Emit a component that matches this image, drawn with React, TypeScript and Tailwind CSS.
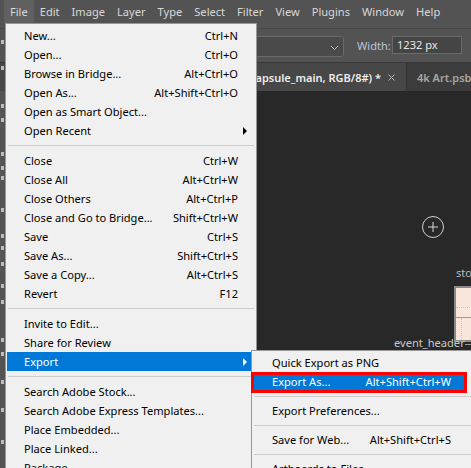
type Entry = { label: string; shortcut?: string; sub?: boolean; active?: boolean } | 'sep'

const menuBar = ['File', 'Edit', 'Image', 'Layer', 'Type', 'Select', 'Filter', 'View', 'Plugins', 'Window', 'Help']

const fileItems: Entry[] = [
  { label: 'New...', shortcut: 'Ctrl+N' },
  { label: 'Open...', shortcut: 'Ctrl+O' },
  { label: 'Browse in Bridge...', shortcut: 'Alt+Ctrl+O' },
  { label: 'Open As...', shortcut: 'Alt+Shift+Ctrl+O' },
  { label: 'Open as Smart Object...' },
  { label: 'Open Recent', sub: true },
  'sep',
  { label: 'Close', shortcut: 'Ctrl+W' },
  { label: 'Close All', shortcut: 'Alt+Ctrl+W' },
  { label: 'Close Others', shortcut: 'Alt+Ctrl+P' },
  { label: 'Close and Go to Bridge...', shortcut: 'Shift+Ctrl+W' },
  { label: 'Save', shortcut: 'Ctrl+S' },
  { label: 'Save As...', shortcut: 'Shift+Ctrl+S' },
  { label: 'Save a Copy...', shortcut: 'Alt+Ctrl+S' },
  { label: 'Revert', shortcut: 'F12' },
  'sep',
  { label: 'Invite to Edit...' },
  { label: 'Share for Review' },
  { label: 'Export', sub: true, active: true },
  'sep',
  { label: 'Search Adobe Stock...' },
  { label: 'Search Adobe Express Templates...' },
  { label: 'Place Embedded...' },
  { label: 'Place Linked...' },
  { label: 'Package...' },
]

const exportItems: Entry[] = [
  { label: 'Quick Export as PNG' },
  { label: 'Export As...', shortcut: 'Alt+Shift+Ctrl+W', active: true },
  'sep',
  { label: 'Export Preferences...' },
  'sep',
  { label: 'Save for Web...', shortcut: 'Alt+Shift+Ctrl+S' },
  'sep',
  { label: 'Artboards to Files...' },
]

const toolMarks = [40, 66, 104, 118, 152, 166, 176, 208, 234, 246, 262, 284, 300, 338, 352, 380, 408, 440]

function Arrow({ white }: { white?: boolean }) {
  return (
    <span
      className={`absolute right-[8px] top-[6px] w-0 h-0 border-y-[4px] border-y-transparent border-l-[4px] ${
        white ? 'border-l-white' : 'border-l-black'
      }`}
    />
  )
}

function FileMenu() {
  return (
    <div className="absolute left-[5px] top-[23px] w-[252px] h-[460px] bg-[#f0f0f0] border border-[#979797] pt-[2px]">
      {fileItems.map((it, i) =>
        it === 'sep' ? (
          <div key={i} className="h-[11px] mx-[2px] flex items-center">
            <div className="h-px w-full bg-[#cccccc]" />
          </div>
        ) : (
          <div
            key={i}
            className={`relative h-[19px] mx-[1px] pl-[17px] pr-[17px] pt-[1px] flex items-center justify-between ${
              it.active ? 'bg-[#0078d7] text-white' : 'text-black'
            }`}
          >
            <span>{it.label}</span>
            {it.shortcut && <span>{it.shortcut}</span>}
            {it.sub && <Arrow white={it.active} />}
          </div>
        )
      )}
    </div>
  )
}

function ExportMenu() {
  return (
    <div className="absolute left-[251px] top-[350px] w-[232px] h-[140px] bg-[#f0f0f0] border border-[#979797] pt-[2px]">
      {exportItems.map((it, i) =>
        it === 'sep' ? (
          <div key={i} className="h-[10px] mx-[2px] flex items-center">
            <div className="h-px w-full bg-[#cccccc]" />
          </div>
        ) : (
          <div
            key={i}
            className={`h-[19px] w-[212px] ml-[2px] pl-[18px] pt-[1px] flex items-center gap-[10px] ${
              it.active ? 'bg-[#0078d7] text-white' : 'text-black'
            }`}
          >
            <span className="whitespace-nowrap">{it.label}</span>
            {it.shortcut && <span className="ml-auto pr-[15px] whitespace-nowrap">{it.shortcut}</span>}
          </div>
        )
      )}
      <div className="absolute left-[-1px] top-[21px] w-[216px] h-[21px] border-[3px] border-[#ff0000]" />
    </div>
  )
}

export default function App() {
  return (
    <div
      className="relative w-[471px] h-[468px] overflow-hidden bg-[#282828] flex flex-col text-[11.1px] leading-none"
      style={{ fontFamily: '"Noto Sans", "Liberation Sans", sans-serif' }}
    >
      {/* menu bar */}
      <div className="h-[28px] shrink-0 bg-[#535353] flex items-start pl-[4px] text-[#d8d8d8]">
        {menuBar.map((m) => (
          <div key={m} className={`h-[23px] px-[6px] flex items-center ${m === 'File' ? 'bg-[#606060]' : ''}`}>
            {m}
          </div>
        ))}
      </div>

      {/* options bar */}
      <div className="h-[34px] shrink-0 bg-[#535353] border-t border-[#474747] flex items-center pt-[1px]">
        <div className="ml-[200px] w-[144px] h-[21px] rounded-[3px] border border-[#6a6a6a] bg-[#4a4a4a] flex items-center justify-end pr-[4px]">
          <svg width="9" height="6" viewBox="0 0 9 6" className="mt-[3px]">
            <polyline points="1,1 4.5,4.5 8,1" fill="none" stroke="#bdbdbd" strokeWidth="1" />
          </svg>
        </div>
        <span className="ml-[13px] w-[35px] text-[#b9c6d8]">Width:</span>
        <div className="w-[70px] h-[18px] -mt-[3px] border border-[#6a6a6a] bg-[#454545] flex items-center pl-[4px] text-[#e6e6e6]">
          1232 px
        </div>
      </div>

      {/* document tabs */}
      <div className="h-[29px] shrink-0 bg-[#3c3c3c] border-t border-[#393939] flex">
        <div className="w-[407px] shrink-0 overflow-hidden bg-[#474747] flex items-center justify-end gap-[7px] pr-[11px] border-r border-[#333333]">
          <span className="whitespace-nowrap font-semibold text-[11px] text-[#eeeeee]">
            Untitled-1 @ 66.7% (capsule_main, RGB/8#) *
          </span>
          <svg width="7" height="7" viewBox="0 0 7 7" className="shrink-0">
            <path d="M0.5 0.5l6 6M6.5 0.5l-6 6" stroke="#b4b4b4" strokeWidth="1" />
          </svg>
        </div>
        <div className="flex items-center pl-[10px] whitespace-nowrap font-semibold text-[11px] text-[#a6a6a6]">
          4k Art.psb
        </div>
      </div>

      {/* workspace */}
      <div className="flex-1 flex">
        <div className="w-[5px] shrink-0 bg-[#535353] relative">
          {toolMarks.map((y) => (
            <div key={y} className="absolute left-[1px] w-[3px] h-[4px] bg-[#bdbdbd]" style={{ top: y - 91 }} />
          ))}
        </div>
        <div className="flex-1 relative bg-[#282828]">
          <div className="absolute left-[417px] top-[125px] w-[22px] h-[22px] rounded-full border border-[#d0d0d0] flex items-center justify-center">
            <svg width="12" height="12" viewBox="0 0 12 12">
              <path d="M6 1v10M1 6h10" stroke="#d8d8d8" strokeWidth="1" />
            </svg>
          </div>
          <span className="absolute left-[451px] top-[176px] text-[#b8b8b8]">story</span>
          <div className="absolute left-[449px] top-[195px] w-[40px] h-[56px] border-2 border-[#8a8a8a] bg-[#f8e6da] flex flex-col">
            <div className="h-[20px] border-b border-dotted border-[#e0b8b0]" />
            <div className="h-[10px] border-b border-[#9a9a9a]" />
            <div className="flex-1 border-l border-dotted border-[#e0b8b0] ml-[5px]" />
          </div>
          <div className="absolute left-[389px] top-[246px] flex items-center text-[#c8c8c8]">
            <span>event_header</span>
            <div className="w-[20px] h-px bg-[#9a9a9a] mt-[3px]" />
          </div>
        </div>
      </div>

      <FileMenu />
      <ExportMenu />
    </div>
  )
}
